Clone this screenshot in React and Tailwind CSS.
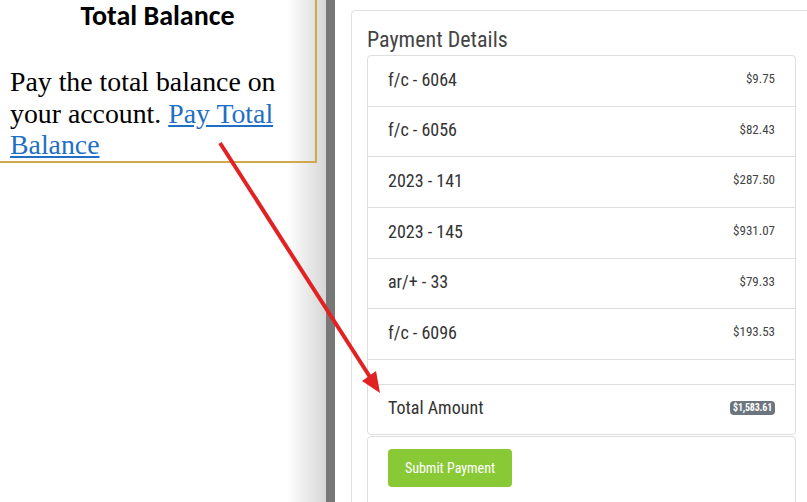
const rows = [
  { label: "f/c - 6064", amount: "$9.75", h: "h-[51px]" },
  { label: "f/c - 6056", amount: "$82.43", h: "h-[50px]" },
  { label: "2023 - 141", amount: "$287.50", h: "h-[51px]" },
  { label: "2023 - 145", amount: "$931.07", h: "h-[51px]" },
  { label: "ar/+ - 33", amount: "$79.33", h: "h-[50px]" },
  { label: "f/c - 6096", amount: "$193.53", h: "h-[51px]" },
];

const cond = "font-['Roboto_Condensed','Liberation_Sans_Narrow',Roboto,sans-serif]";

const App = () => {
  return (
    <div className="relative flex h-[502px] w-[807px] overflow-hidden bg-white">
      {/* Left document panel */}
      <div className="w-[326px] shrink-0 bg-gradient-to-r from-white from-[88%] to-[#d6d6d6]">
        <div className="h-[163px] w-[317px] border-r-2 border-b-2 border-[#cfa94e]">
          <h2 className="pt-[2px] text-center font-['Carlito','Lato',sans-serif] text-[28px] font-bold leading-[28px] text-black">
            Total Balance
          </h2>
          <p className="mt-[36px] pl-[10px] pr-[6px] font-['Liberation_Serif',serif] text-[27.8px] leading-[31.7px] text-black">
            Pay the total balance on your account.{" "}
            <a href="#" className="text-[#1f6fc5] underline">
              Pay Total Balance
            </a>
          </p>
        </div>
      </div>
      <div className="w-[9px] shrink-0 bg-[#777777]" />

      {/* Right payment panel */}
      <div className={`flex-1 pl-4 pt-[10px] ${cond}`}>
        <div className="w-[461px] rounded-[4px] border border-[#e0e0e0] px-[15px] pt-4">
          <h3 className="mb-[3px] text-[22px] leading-[25px] text-[#444]">
            Payment Details
          </h3>
          <div className="rounded-[4px] border border-[#dedede]">
            {rows.map((row) => (
              <div
                key={row.label}
                className={`flex items-center justify-between border-b border-[#dedede] px-5 pb-[4px] ${row.h}`}
              >
                <span className="text-[18px] text-[#333]">{row.label}</span>
                <span className="text-[13px] text-[#444]">{row.amount}</span>
              </div>
            ))}
            <div className="h-[25px] border-b border-[#dedede]" />
            <div className="flex h-[49px] items-center justify-between px-5 pb-[4px]">
              <span className="text-[18px] text-[#333]">Total Amount</span>
              <span className="rounded-[4px] bg-[#6c757d] px-[3px] text-[10px] font-bold leading-[14px] tracking-[-0.2px] text-white">
                $1,583.61
              </span>
            </div>
          </div>
          <div className="mt-px h-[80px] rounded-t-[4px] border border-[#dedede] pl-5 pt-3">
            <button className="h-[38px] w-[124px] rounded-[4px] bg-[#8ac936] text-[14px] text-white">
              Submit Payment
            </button>
          </div>
        </div>
      </div>

      {/* Annotation arrow */}
      <svg
        className="pointer-events-none absolute left-0 top-0"
        width="807"
        height="502"
        viewBox="0 0 807 502"
      >
        <line
          x1="220"
          y1="143"
          x2="370"
          y2="377"
          stroke="#e22222"
          strokeWidth="4"
        />
        <polygon points="380,393 362,381 376,371" fill="#e22222" />
      </svg>
    </div>
  );
};

export default App;
